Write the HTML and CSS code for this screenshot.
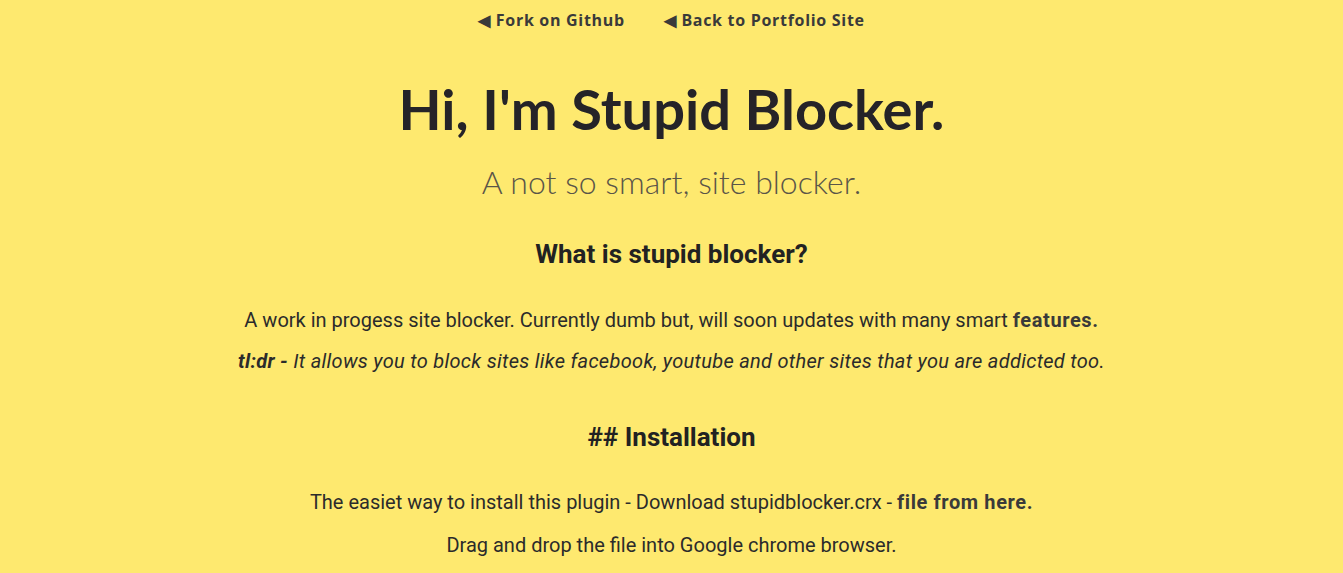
FILE: index.html
```html
<!DOCTYPE html>
<html lang="en">
<head>
<meta charset="utf-8">
<title>Stupid Blocker</title>
<link rel="stylesheet" href="styles.css">
</head>
<body>
<nav class="nav">
  <a class="nav-link" href="#">&#9664; Fork on Github</a>
  <a class="nav-link" href="#">&#9664; Back to Portfolio Site</a>
</nav>
<header class="hero">
  <h1 class="title">Hi, I'm Stupid Blocker.</h1>
  <p class="subtitle">A not so smart, site blocker.</p>
</header>
<main class="content">
  <h2 class="section-title">What is stupid blocker?</h2>
  <p class="text lead">A work in progess site blocker. Currently dumb but, will soon updates with many smart <a class="strong-link" href="#">features.</a></p>
  <p class="text italic"><b>tl:dr -</b> It allows you to block sites like facebook, youtube and other sites that you are addicted too.</p>
  <h2 class="section-title install">## Installation</h2>
  <p class="text condensed first">The easiet way to install this plugin - Download stupidblocker.crx - <a class="strong-link" href="#">file from here.</a></p>
  <p class="text condensed">Drag and drop the file into Google chrome browser.</p>
</main>
</body>
</html>
```
FILE: styles.css
```css
html, body {
  margin: 0;
  padding: 0;
}
body {
  background: #fee96f;
  color: #262626;
  font-family: Roboto, "Liberation Sans", sans-serif;
  text-align: center;
}
.nav {
  display: flex;
  justify-content: center;
  gap: 39px;
  padding-top: 9px;
}
.nav-link {
  font-family: "Open Sans", sans-serif;
  font-weight: 700;
  font-size: 16px;
  letter-spacing: 0.7px;
  color: #3a3a3a;
  text-decoration: none;
  line-height: 22px;
}
.hero {
  padding-top: 43px;
}
.title {
  margin: 0;
  font-family: Lato, sans-serif;
  font-weight: 700;
  font-size: 56px;
  line-height: 70px;
  color: #252328;
}
.subtitle {
  margin: 18px 0 0;
  font-family: Lato, sans-serif;
  font-weight: 300;
  font-size: 32px;
  line-height: 40px;
  color: #5a5548;
}
.content {
  padding-top: 34px;
}
.section-title {
  margin: 0;
  font-size: 26px;
  font-weight: 700;
  line-height: 36px;
  color: #222;
}
.text {
  margin: 0;
  font-size: 20px;
  line-height: 41px;
  color: #2b2b2b;
}
.lead {
  margin-top: 28px;
}
.italic {
  font-style: italic;
  letter-spacing: 0.3px;
}
.strong-link {
  font-weight: 700;
  color: #3a3a3a;
  text-decoration: none;
  letter-spacing: 0.6px;
}
.install {
  margin-top: 37px;
}
.condensed {
  line-height: 43px;
}
.first {
  margin-top: 26px;
}
```
